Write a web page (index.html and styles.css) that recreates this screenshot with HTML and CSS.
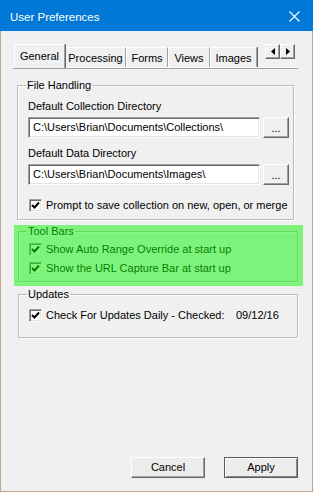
FILE: index.html
```html
<!DOCTYPE html>
<html lang="en">
<head>
    <meta charset="UTF-8">
    <title>User Preferences</title>
    <link rel="stylesheet" href="styles.css">
</head>
<body>
    <div class="window">
        <div class="titlebar">
            <span class="title">User Preferences</span>
            <svg class="close" width="11" height="11" viewBox="0 0 11 11">
                <path d="M0.5 0.5 L10.5 10.5 M10.5 0.5 L0.5 10.5" stroke="#fff" stroke-width="1.1" fill="none"/>
            </svg>
        </div>

        <div class="dialog-body">
            <div class="tabstrip">
                <div class="tab selected tab-general">General</div>
                <div class="tab tab-processing">Processing</div>
                <div class="tab tab-forms">Forms</div>
                <div class="tab tab-views">Views</div>
                <div class="tab tab-images">Images</div>
                <div class="spin">
                    <span class="spin-btn">
                        <svg width="4" height="7" viewBox="0 0 4 7"><path d="M4 0 L0 3.5 L4 7 Z" fill="#000"/></svg>
                    </span>
                    <span class="spin-btn">
                        <svg width="4" height="7" viewBox="0 0 4 7"><path d="M0 0 L4 3.5 L0 7 Z" fill="#000"/></svg>
                    </span>
                </div>
            </div>

            <fieldset class="group file-group">
                <legend>File Handling</legend>
                <div class="field-label first">Default Collection Directory</div>
                <div class="path-row">
                    <div class="textbox">C:\Users\Brian\Documents\Collections\</div>
                    <div class="browse">...</div>
                </div>
                <div class="field-label">Default Data Directory</div>
                <div class="path-row">
                    <div class="textbox">C:\Users\Brian\Documents\Images\</div>
                    <div class="browse">...</div>
                </div>
                <div class="check-row prompt-row">
                    <span class="check"><svg width="9" height="9" viewBox="0 0 9 9"><path d="M1 4 L3.5 6.5 L8 1.5" stroke="#000" stroke-width="2" fill="none"/></svg></span>
                    <span>Prompt to save collection on new, open, or merge</span>
                </div>
            </fieldset>

            <div class="highlight-area">
                <fieldset class="group toolbars-group">
                    <legend>Tool Bars</legend>
                    <div class="check-row first-check">
                        <span class="check"><svg width="9" height="9" viewBox="0 0 9 9"><path d="M1 4 L3.5 6.5 L8 1.5" stroke="#000" stroke-width="2" fill="none"/></svg></span>
                        <span>Show Auto Range Override at start up</span>
                    </div>
                    <div class="check-row second-check">
                        <span class="check"><svg width="9" height="9" viewBox="0 0 9 9"><path d="M1 4 L3.5 6.5 L8 1.5" stroke="#000" stroke-width="2" fill="none"/></svg></span>
                        <span>Show the URL Capture Bar at start up</span>
                    </div>
                </fieldset>
                <div class="highlight"></div>
            </div>

            <fieldset class="group updates-group">
                <legend>Updates</legend>
                <div class="check-row first-check">
                    <span class="check"><svg width="9" height="9" viewBox="0 0 9 9"><path d="M1 4 L3.5 6.5 L8 1.5" stroke="#000" stroke-width="2" fill="none"/></svg></span>
                    <span class="update-text">Check For Updates Daily - Checked:</span>
                    <span>09/12/16</span>
                </div>
            </fieldset>

            <div class="buttons">
                <div class="btn">Cancel</div>
                <div class="btn default">Apply</div>
            </div>
        </div>
    </div>
</body>
</html>
```

FILE: styles.css
```css
* {
    margin: 0;
    padding: 0;
    box-sizing: border-box;
}

html, body {
    width: 313px;
    height: 492px;
    background: #f0f0f0;
    overflow: hidden;
}

body {
    font-family: "Liberation Sans", Arial, sans-serif;
    font-size: 11px;
    color: #000;
}

.window {
    width: 313px;
    height: 492px;
    display: flex;
    flex-direction: column;
}

/* title bar */
.titlebar {
    height: 31px;
    flex: none;
    background: #0078d7;
    display: flex;
    align-items: center;
    justify-content: space-between;
    padding: 2px 13px 0 10px;
}

.title {
    color: #fff;
    font-size: 11.5px;
}

.close {
    display: block;
}

.dialog-body {
    flex: 1;
    display: flex;
    flex-direction: column;
    border: 1px solid #bfa58d;
    border-top: none;
}

/* tabs */
.tabstrip {
    height: 26px;
    margin: 11px 14px 0 12px;
    display: flex;
    align-items: flex-end;
    border-bottom: 1px solid #fff;
    box-shadow: 0 1px 0 #a0a0a0;
    padding-left: 1px;
}

.tab {
    height: 20px;
    display: flex;
    align-items: center;
    justify-content: center;
    border-top: 1px solid #fff;
    border-left: 1px solid #fff;
    border-right: 1px solid #a0a0a0;
    box-shadow: 1px 0 0 #696969;
    padding-top: 1px;
}

.tab.selected {
    height: 24px;
    padding-top: 0;
    padding-bottom: 2px;
    position: relative;
    top: 1px;
    background: #f0f0f0;
}

.tab-general { width: 51px; }
.tab-processing { width: 61px; }
.tab-forms { width: 42px; }
.tab-views { width: 42px; }
.tab-images { width: 47px; }

.spin {
    display: flex;
    margin-left: auto;
    margin-right: 3px;
    align-self: flex-start;
    margin-top: 2px;
}

.spin-btn {
    width: 15px;
    height: 15px;
    display: flex;
    align-items: center;
    justify-content: center;
    border-top: 1px solid #fff;
    border-left: 1px solid #fff;
    border-right: 1px solid #696969;
    border-bottom: 1px solid #696969;
    box-shadow: inset -1px -1px 0 #a0a0a0;
}

/* group boxes */
.group {
    border: 1px solid #bcbcbc;
    box-shadow: inset 1px 1px 0 #fff, 1px 1px 0 #fff;
    padding: 0 4px 7px 10px;
}

.group legend {
    margin-left: -2px;
    padding: 0 1px;
    line-height: 13px;
}

.file-group {
    margin: 11px 18px 0 16px;
}

.field-label {
    line-height: 13px;
    margin-top: 9px;
}

.field-label.first {
    margin-top: 8px;
}

.path-row {
    display: flex;
    gap: 3px;
    margin-top: 4px;
}

.path-row + .field-label {
    margin-top: 9px;
}

.textbox {
    flex: 1;
    height: 21px;
    background: #fff;
    border-top: 1px solid #a0a0a0;
    border-left: 1px solid #a0a0a0;
    border-right: 1px solid #fff;
    border-bottom: 1px solid #fff;
    box-shadow: inset 1px 1px 0 #696969, inset -1px -1px 0 #e3e3e3;
    padding: 0 0 0 4px;
    line-height: 19px;
    white-space: nowrap;
    overflow: hidden;
}

.browse {
    width: 26px;
    height: 21px;
    border-top: 1px solid #fff;
    border-left: 1px solid #fff;
    border-right: 1px solid #696969;
    border-bottom: 1px solid #696969;
    box-shadow: inset -1px -1px 0 #a0a0a0;
    text-align: center;
    line-height: 20px;
}

.check-row {
    display: flex;
    align-items: center;
    height: 13px;
    line-height: 13px;
}

.prompt-row {
    margin-top: 14px;
    padding-left: 1px;
}

.check {
    width: 13px;
    height: 13px;
    flex: none;
    margin-right: 4px;
    background: #fff;
    border-top: 1px solid #a0a0a0;
    border-left: 1px solid #a0a0a0;
    border-right: 1px solid #fff;
    border-bottom: 1px solid #fff;
    box-shadow: inset 1px 1px 0 #696969, inset -1px -1px 0 #e3e3e3;
    display: flex;
    align-items: center;
    justify-content: center;
}

.highlight-area {
    position: relative;
    margin: 5px 9px 0 13px;
    padding: 0 5px 4px 4px;
}

.toolbars-group {
    padding-bottom: 6px;
}

.toolbars-group .first-check {
    margin-top: 5px;
}

.toolbars-group .second-check {
    margin-top: 6px;
}

.highlight {
    position: absolute;
    inset: 0;
    background: rgba(10, 245, 5, 0.5);
    pointer-events: none;
}

.updates-group {
    margin: 2px 14px 0 17px;
    padding-bottom: 15px;
}

.updates-group .first-check {
    margin-top: 8px;
}

.update-text {
    width: 190px;
}

/* bottom buttons */
.buttons {
    margin-top: auto;
    display: flex;
    justify-content: flex-end;
    gap: 19px;
    padding: 0 14px 13px 0;
}

.btn {
    width: 74px;
    height: 21px;
    background: #ececec;
    border-top: 1px solid #fff;
    border-left: 1px solid #fff;
    border-right: 1px solid #696969;
    border-bottom: 1px solid #696969;
    box-shadow: inset -1px -1px 0 #a0a0a0;
    text-align: center;
    line-height: 19px;
}

.btn.default {
    border: 1px solid #5a5a5a;
    box-shadow: inset 1px 1px 0 #fff, inset -1px -1px 0 #8a8a8a;
}
```
